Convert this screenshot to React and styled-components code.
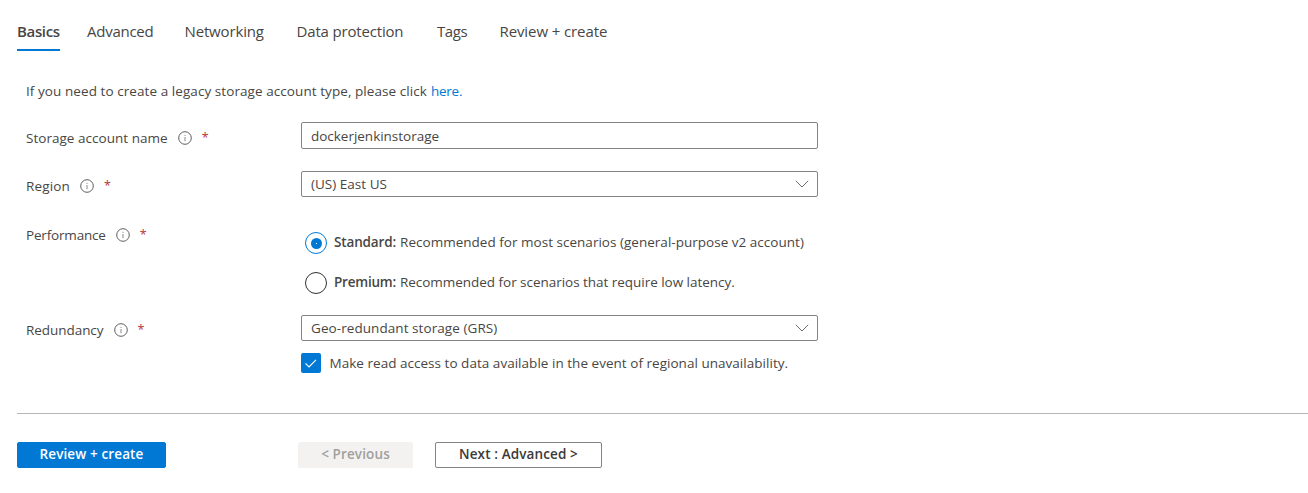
import React from 'react';
import styled, { createGlobalStyle } from 'styled-components';

const GlobalStyle = createGlobalStyle`
  *, *::before, *::after { box-sizing: border-box; }
  body {
    margin: 0;
    background: #fff;
    color: #484644;
    font-family: "Segoe UI", "Open Sans", sans-serif;
    font-size: 13.5px;
    line-height: 20px;
    overflow: hidden;
  }
`;

const Text = styled.span`
  white-space: nowrap;
  letter-spacing: ${({ $track = 0 }) => $track}px;
`;

const Strong = styled(Text)`
  padding-bottom: 2px;
  font-weight: 600;
`;

const Page = styled.main`
  height: 493px;
  padding-left: 17px;
`;

const TabList = styled.nav`
  display: flex;
  height: 51px;
  padding-top: 21px;
`;

const Tab = styled.button`
  width: ${({ $width }) => $width}px;
  height: 30px;
  margin: 0 ${({ $gap }) => $gap}px 0 0;
  padding: 0 0 8px;
  border: 0;
  border-bottom: 2px solid ${({ $active }) => ($active ? '#0078d4' : 'transparent')};
  background: none;
  color: inherit;
  font: ${({ $active }) => ($active ? 600 : 400)} 15px/20px "Segoe UI", "Open Sans", sans-serif;
  letter-spacing: ${({ $track = 0 }) => $track}px;
  text-align: left;
  white-space: nowrap;
`;

const Form = styled.form`
  padding: 30px 0 0 9px;
`;

const Note = styled.p`
  margin: 0;
  white-space: nowrap;
`;

const Link = styled.a`
  margin-left: 4px;
  color: #0078d4;
  letter-spacing: -0.25px;
`;

const Field = styled.div`
  display: grid;
  grid-template-columns: 275px 517px;
  align-items: start;
  margin-top: ${({ $top }) => $top}px;
`;

const Label = styled.div`
  display: flex;
  align-items: center;
  height: 20px;
  margin-top: ${({ $top }) => $top}px;
`;

const InfoSvg = styled.svg`
  flex: none;
  width: 14px;
  height: 14px;
  margin: -1px 10px 0 10px;
`;

const Required = styled.span`
  color: #b3363c;
  font-size: 12.5px;
`;

const Box = styled.div`
  display: flex;
  align-items: center;
  justify-content: space-between;
  height: ${({ $height = 26 }) => $height}px;
  padding: 0 8px 0 9px;
  border: 1px solid #868482;
  border-radius: 2px;
`;

const ChevronSvg = styled.svg`
  width: 14px;
  height: 8px;
`;

const Options = styled.div`
  display: grid;
  gap: 18px;
  padding-left: 4px;
`;

const Option = styled.label`
  display: flex;
  align-items: center;
  height: 22px;
`;

const RadioRing = styled.span`
  display: grid;
  place-items: center;
  flex: none;
  width: 22px;
  height: 22px;
  margin-right: 7px;
  border: 1px solid ${({ $checked }) => ($checked ? '#0078d4' : '#323130')};
  border-radius: 50%;

  &::after {
    content: "";
    width: 11px;
    height: 11px;
    border-radius: 50%;
    background: ${({ $checked }) => ($checked ? 'radial-gradient(circle, #fff 0 0.3px, #0078d4 0.8px)' : 'none')};
  }
`;

const OptionText = styled(Text)`
  margin-left: 4px;
  padding-bottom: 2px;
`;

const CheckRow = styled.label`
  display: flex;
  align-items: center;
  height: 20px;
  margin-top: 12px;
`;

const CheckBox = styled.span`
  display: grid;
  place-items: center;
  width: 20px;
  height: 20px;
  margin-right: 8.5px;
  border-radius: 2px;
  background: #0078d4;
`;

const Footer = styled.footer`
  display: flex;
  margin-top: 40px;
  padding-top: 28px;
  border-top: 1px solid #b9b7b5;
`;

const Button = styled.button`
  width: ${({ $width }) => $width}px;
  height: 26px;
  margin: 0 ${({ $gap = 0 }) => $gap}px 0 0;
  padding: 0 0 2px;
  border: 1px solid #868482;
  border-radius: 2px;
  background: #fff;
  color: #3b3a39;
  font: 600 13.5px/20px "Segoe UI", "Open Sans", sans-serif;
  letter-spacing: ${({ $track = 0.12 }) => $track}px;
  white-space: nowrap;
`;

const PrimaryButton = styled(Button)`
  border-color: #0078d4;
  background: #0078d4;
  color: #fff;
`;

const DisabledButton = styled(Button)`
  border-color: #f3f2f1;
  background: #f3f2f1;
  color: #a19f9d;
`;

const InfoIcon = () => (
  <InfoSvg viewBox="0 0 14 14" fill="none" stroke="#605e5c">
    <circle cx="7" cy="7" r="6.3" />
    <path d="M7 6v4.2M7 3.8v1.1" stroke="#8a8886" />
  </InfoSvg>
);

const Chevron = () => (
  <ChevronSvg viewBox="0 0 14 8" fill="none" stroke="#605e5c" strokeWidth="0.9">
    <path d="M.8.8 7 7 13.2.8" />
  </ChevronSvg>
);

const FieldLabel = ({ children, track, top }) => (
  <Label $top={top}>
    <Text $track={track}>{children}</Text>
    <InfoIcon />
    <Required>*</Required>
  </Label>
);

const tabs = [
  { label: 'Basics', width: 43, gap: 27, track: -0.35, active: true },
  { label: 'Advanced', width: 67, gap: 30.5, track: -0.25 },
  { label: 'Networking', width: 80, gap: 32, track: -0.15 },
  { label: 'Data protection', width: 108, gap: 32.5, track: -0.17 },
  { label: 'Tags', width: 31, gap: 31.5, track: -0.4 },
  { label: 'Review + create', width: 110, gap: 0, track: -0.1 },
];

export default function App() {
  return (
    <>
      <GlobalStyle />
      <Page>
        <TabList>
          {tabs.map(({ label, width, gap, track, active }) => (
            <Tab key={label} $width={width} $gap={gap} $track={track} $active={active}>{label}</Tab>
          ))}
        </TabList>
        <Form>
          <Note>
            <Text $track={0.07}>If you need to create a legacy storage account type, please click</Text>
            <Link>here.</Link>
          </Note>
          <Field $top={21}>
            <FieldLabel top={6} track={0.03}>Storage account name</FieldLabel>
            <Box $height={27}><Text $track={-0.02}>dockerjenkinstorage</Text></Box>
          </Field>
          <Field $top={22}>
            <FieldLabel top={5} track={0.15}>Region</FieldLabel>
            <Box><Text $track={0.02}>(US) East US</Text><Chevron /></Box>
          </Field>
          <Field $top={35}>
            <FieldLabel top={-7} track={-0.18}>Performance</FieldLabel>
            <Options>
              <Option>
                <RadioRing $checked />
                <Strong $track={-0.14}>Standard:</Strong>
                <OptionText $track={0.02}>Recommended for most scenarios (general-purpose v2 account)</OptionText>
              </Option>
              <Option>
                <RadioRing />
                <Strong $track={-0.22}>Premium:</Strong>
                <OptionText $track={-0.03}>Recommended for scenarios that require low latency.</OptionText>
              </Option>
            </Options>
          </Field>
          <Field $top={21}>
            <FieldLabel top={5} track={-0.05}>Redundancy</FieldLabel>
            <div>
              <Box><Text $track={0.07}>Geo-redundant storage (GRS)</Text><Chevron /></Box>
              <CheckRow>
                <CheckBox>
                  <svg width="14" height="14" viewBox="0 0 14 14" fill="none" stroke="#fff" strokeWidth="1.2">
                    <path d="m1.5 7.3 3.5 3.5 7-7" />
                  </svg>
                </CheckBox>
                <Text $track={0.03}>Make read access to data available in the event of regional unavailability.</Text>
              </CheckRow>
            </div>
          </Field>
        </Form>
        <Footer>
          <PrimaryButton $width={149} $gap={132}>Review + create</PrimaryButton>
          <DisabledButton $width={115} $gap={22} disabled>&lt; Previous</DisabledButton>
          <Button $width={167}>Next : Advanced &gt;</Button>
        </Footer>
      </Page>
    </>
  );
}
